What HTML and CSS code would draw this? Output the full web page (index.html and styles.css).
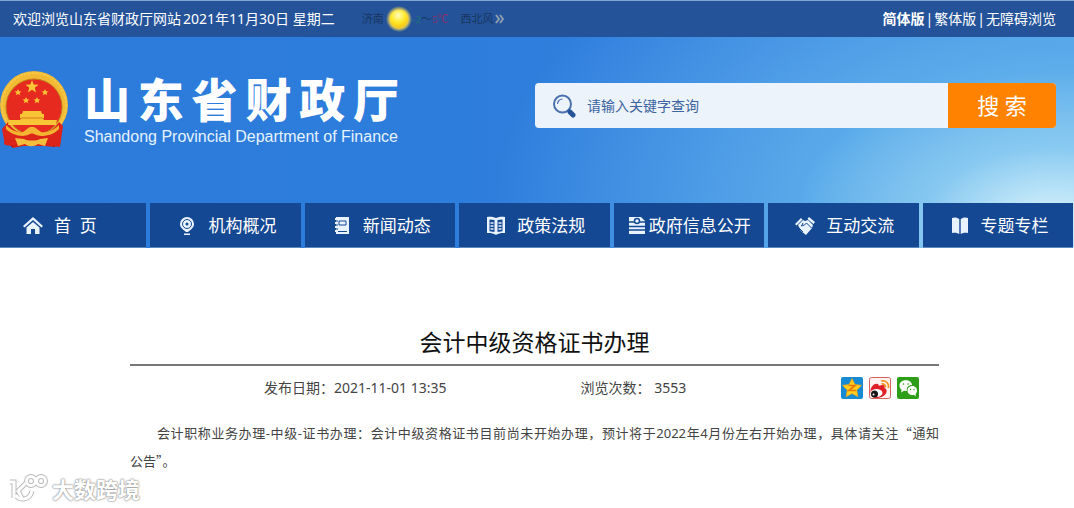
FILE: index.html
```html
<!DOCTYPE html>
<html lang="zh-CN">
<head>
<meta charset="utf-8">
<title>会计中级资格证书办理</title>
<link rel="stylesheet" href="styles.css">
</head>
<body>
<div class="topbar">
  <div class="welcome"><span>欢迎浏览山东省财政厅网站</span><span>2021年11月30日 星期二</span></div>
  <div class="weather">
    <span>济南</span>
    <svg class="sun" viewBox="0 0 26 26" aria-hidden="true">
      <defs>
        <radialGradient id="halo"><stop offset=".7" stop-color="#e9d257"/><stop offset="1" stop-color="#e9d257" stop-opacity="0"/></radialGradient>
        <radialGradient id="disc" cx=".45" cy=".3" r=".75"><stop offset="0" stop-color="#fffbc0"/><stop offset=".5" stop-color="#ffea2e"/><stop offset="1" stop-color="#f5bc0c"/></radialGradient>
      </defs>
      <circle cx="13" cy="13" r="13" fill="url(#halo)"/><circle cx="13" cy="13" r="9" fill="url(#disc)"/>
    </svg>
    <span class="temp"><span class="low">-2</span>～<span class="high">5℃</span></span>
    <span>西北风</span>
    <svg class="more" viewBox="0 0 9 10" aria-hidden="true"><path d="M1 1l3 4-3 4M5 1l3 4-3 4"/></svg>
  </div>
  <div class="versions"><a href="#" class="current">简体版</a><span>|</span><a href="#">繁体版</a><span>|</span><a href="#">无障碍浏览</a></div>
</div>

<div class="hero">
  <header class="masthead">
    <div class="brand">
      <svg class="emblem" viewBox="0 0 68 78" aria-hidden="true">
        <path d="M9 54L6 63 4 74l6 1 3 3 10-2h22l10 1 2-4 4-1-2-17z" fill="#d92118"/>
        <path d="M6 61l7 8-1 8M59 60l-6 10 1 7" stroke="#8f1010" stroke-width="1.5" fill="none"/>
        <circle cx="34" cy="35" r="34" fill="#f2b934"/>
        <circle cx="34" cy="35" r="32" fill="none" stroke="#f6c846" stroke-width="2" stroke-dasharray="3 1"/>
        <circle cx="34" cy="37" r="28" fill="#e62a20" stroke="#bd7c1b"/>
        <path d="M8 52c5 9 12 12 19 10 2-5 9-5 11 0 8 2 15-1 21-10l4 4-3 21-8-1-6-4-14 3-14-3-6 4-7-1-3-16z" fill="#dc241a"/>
        <g fill="#f8c537">
          <path d="M32 10l1.700 4.600 4.900.200-3.900 3 1.400 4.700-4.100-2.700-4.100 2.700 1.400-4.700-3.900-3 4.900-.200z"/>
          <path d="M18 19l1 2.300 2.500.100-2 1.500.7 2.400-2.200-1.300-2.200 1.300.7-2.400-2-1.500 2.500-.1z"/>
          <path d="M45 19l1 2.300 2.500.100-2 1.500.7 2.400-2.200-1.300-2.200 1.300.7-2.400-2-1.500 2.500-.1z"/>
          <path d="M26 27l1 2.300 2.500.100-2 1.500.7 2.400-2.200-1.300-2.200 1.300.7-2.400-2-1.500 2.500-.1z"/>
          <path d="M37 27l1 2.300 2.500.100-2 1.500.7 2.400-2.200-1.300-2.200 1.300.7-2.400-2-1.500 2.500-.1z"/>
          <path d="M23 41h18l1 3h2v4h-1l1 2h13l-1 5H8l1-5h11l1-2h-1v-4h2z"/>
        </g>
        <path d="M21 48h22" stroke="#d9781b"/>
        <path d="M6 55c5 5 11 8 17 7l4-3c3-3 7-3 10 0l4 3c6 1 13-2 18-7v4c-5 5-11 7-18 7l-5-1c-3-2-5-2-8 0l-5 1c-7 0-13-3-17-7z" fill="#f3b432"/>
        <path d="M15 68l9 1c3 2 13 2 16 0l8-1-3 8-7-2c-4 3-9 3-13 0l-7 2z" fill="#f3bd3d"/>
      </svg>
      <div class="brand-text">
        <h1>山东省财政厅</h1>
        <p>Shandong Provincial Department of Finance</p>
      </div>
    </div>
    <form class="search" role="search">
      <label for="q"><svg viewBox="0 0 24 24" role="img" aria-label="搜索关键字"><circle cx="10.500" cy="10" r="8.500" fill="none" stroke="#4a71ad" stroke-width="2"/><path d="M5.500 10a5 5 0 0 1 5-5" fill="none" stroke="#4a71ad" stroke-width="1.200"/><path d="M16 16l2 2" stroke="#2e5ca0" stroke-width="2"/><path d="M18 18l3 3" stroke="#24539a" stroke-width="5" stroke-linecap="round"/></svg></label>
      <input id="q" type="text" placeholder="请输入关键字查询">
      <button type="button">搜 索</button>
    </form>
  </header>
  <nav class="mainnav">
    <a href="#"><svg viewBox="0 0 20 20"><path d="M0 10l10-9 10 9-1.500 1.500L10 4l-8.500 7.500z"/><path d="M3.500 11.500L10 6l6.500 5.500V18H12v-5H8v5H3.500z"/></svg>首&nbsp; 页</a>
    <a href="#"><svg viewBox="0 0 20 20"><path d="M10 1a7 7 0 0 0-7 7c0 4 4 6 6 8h2c2-2 6-4 6-8a7 7 0 0 0-7-7z"/><circle cx="10" cy="8" r="4.500" class="line"/><circle cx="10" cy="8" r="1.500" class="cut"/><path d="M7 17.500h6v1.500H7z"/></svg>机构概况</a>
    <a href="#"><svg viewBox="0 0 20 20"><path d="M4 1h13v17H4v-2H3v-2h1v-2H3v-2h1V8H3V6h1V4H3V2h1z"/><path d="M7 5h7v4H7zM3 5h3M3 9h3M3 13h3M6 15.500h9" class="line"/></svg>新闻动态</a>
    <a href="#"><svg viewBox="0 0 20 20"><path d="M1 1c4-.5 6 0 9 1 3-1 5-1.500 9-1v16c-4-.2-6 .2-9 2-3-1.800-5-2.200-9-2z"/><path d="M3.500 3.500l5 .5v12l-5-.8zM16.500 3.500l-5 .5v12l5-.8z" class="cut"/><path d="M4.500 7h3M4.500 10h3M4.500 13h3M12.500 7h3M12.500 10h3M12.500 13h3" class="bright"/></svg>政策法规</a>
    <a href="#" class="tight"><svg viewBox="0 0 20 20"><path d="M2 1h12l4 4v13H2z"/><path d="M2 6h5M13 6h6M2 10.500h16M2 14h16" class="stroke"/><circle cx="10" cy="5" r="2.500" class="stroke"/></svg>政府信息公开</a>
    <a href="#"><svg viewBox="0 0 20 20"><path d="M0 8l6-6 1.500 1.500L1.500 9.500zM14 1l6 5-1.500 2-6-5zM3 9l5-5 2 1 3-1 5 5-1 3-6 7-5-4z"/><path d="M8 7L6.500 10l3-1 2-2 5 5M4 12l4 4" class="line"/></svg>互动交流</a>
    <a href="#"><svg viewBox="0 0 20 20"><path d="M2 2c3-1 5-.5 7.300 1v15C7 17 5 16.500 2 17zM18 2c-3-1-5-.5-7.300 1v15c2.300-1 4.300-1.500 7.300-1z"/></svg>专题专栏</a>
  </nav>
</div>

<main class="article">
  <h2>会计中级资格证书办理</h2>
  <div class="meta">
    <span class="date">发布日期：2021-11-01 13:35</span>
    <span class="views">浏览次数： 3553</span>
    <div class="share">
      <a href="#" aria-label="QQ空间"><svg viewBox="0 0 22 22"><rect width="22" height="22" rx="2" fill="#168bd3"/><path d="M11 1.500l2.900 6 6.600.900-4.800 4.600 1.200 6.600L11 16.500l-5.900 3.100 1.200-6.600L1.500 8.400l6.600-.9z" fill="#ffcf20" stroke="#f3a313" stroke-width=".7"/><path d="M7.500 8.500h6.500l-6 5h7" fill="none" stroke="#e8780c" stroke-width="1.700"/></svg></a>
      <a href="#" aria-label="新浪微博"><svg viewBox="0 0 22 22"><rect x=".5" y=".5" width="21" height="21" rx="2" fill="#fdf2ef" stroke="#d6605c"/><path d="M1.500 14c0-4 4-8 7-7 2 .5 1 2 1 2s5-2 6 0c.5 1 0 2 0 2s3 1 2 4c-1 5-9 7-13 5.500-2-1-3-3.500-3-6.500z" fill="#df2029"/><ellipse cx="7.500" cy="16" rx="6" ry="4" fill="#fff"/><circle cx="5.500" cy="17" r="3.500" fill="#161616"/><circle cx="4.500" cy="17.500" r="1" fill="#fff"/><path d="M12 4c5-1 8 2 7.500 7M12.500 7c2.500-.5 4.300.8 4 3.500" fill="none" stroke="#f29422" stroke-width="1.700"/></svg></a>
      <a href="#" aria-label="微信"><svg viewBox="0 0 22 22"><rect width="22" height="22" rx="2" fill="#2c9e18"/><path d="M2.500 8.500c0-7 12.500-7 12.500-.5-3 0-6 2-5 6l-3-.3L4 15.500l.7-2.700C3 11.800 2.500 10 2.500 8.500z" fill="#fff"/><path d="M20 13.500c0-6-9.500-6-9.500 0 0 3.500 3 5 6 4.300l2.500 1.500-.6-2.200c1-.8 1.600-2 1.600-3.600z" fill="#fff"/><g fill="#2c9e18"><circle cx="6.500" cy="7" r=".8"/><circle cx="11" cy="7" r=".8"/><circle cx="13.500" cy="12.500" r=".7"/><circle cx="17" cy="12.500" r=".7"/></g></svg></a>
    </div>
  </div>
  <p class="content">会计职称业务办理-中级-证书办理：会计中级资格证书目前尚未开始办理，预计将于2022年4月份左右开始办理，具体请关注<span class="quote">“</span>通知<span class="keep">公告<span class="quote">”</span>。</span></p>
</main>

<div class="watermark">
  <svg viewBox="0 0 42 30" aria-hidden="true">
    <g class="edge"><path d="M2 8h4v16M18 9l-8 8 4 7M8 21c2 6 14 6 16-4"/><circle cx="23" cy="7" r="4.500"/><circle cx="33" cy="7" r="4.500"/></g>
    <g class="fill"><path d="M2 8h4v16M18 9l-8 8 4 7M8 21c2 6 14 6 16-4"/><circle cx="23" cy="7" r="4.500"/><circle cx="33" cy="7" r="4.500"/></g>
  </svg>
  <span>大数跨境</span>
</div>
</body>
</html>
```
FILE: styles.css
```css
* { box-sizing: border-box; }

body {
  margin: 0;
  min-height: 100vh;
  position: relative;
  background: #fff;
  color: #444;
  font: 14px/20px "Noto Sans", "Noto Sans CJK SC", sans-serif;
}

a { color: inherit; text-decoration: none; }
h1, h2, p { margin: 0; }
svg { display: block; flex: none; }

.topbar {
  display: flex;
  align-items: center;
  height: 37px;
  padding: 0 18px 0 13px;
  border-top: 1px solid #7fa5d4;
  background: #24539a;
  color: #fff;
}
.welcome { display: flex; gap: 2px; white-space: nowrap; }
.weather {
  display: flex;
  align-items: center;
  margin-left: 27px;
  color: #183660;
  font-family: "Liberation Serif", "Noto Sans CJK SC", serif;
  font-size: 11px;
}
.sun { width: 26px; height: 26px; margin-left: 2px; }
.temp { margin-right: 12px; }
.low { color: #1c7773; }
.high { color: #8b3068; }
.more { width: 9px; height: 10px; margin-left: 2px; fill: none; stroke: #8b9cb0; stroke-width: 2; }
.versions { display: flex; gap: 1px; margin-left: auto; }
.current { font-weight: 700; }

.hero {
  overflow: hidden;
  background:
    radial-gradient(ellipse 260px 150px at 98% 88%, #d9f3fb, #a0d8f480 50%, #7cc4ef00),
    radial-gradient(ellipse 580px 340px at 100% 80%, #80c6f0, #5aaaea 45%, #3583e000),
    linear-gradient(90deg, #2c7bdb, #2d7ddc 40%, #3984e2);
}
.masthead {
  display: flex;
  justify-content: space-between;
  align-items: flex-start;
  height: 166px;
  padding-right: 18px;
}
.brand { display: flex; gap: 16px; padding-top: 33px; color: #fff; }
.emblem { width: 68px; height: 78px; }
.brand-text { width: 315px; }
.brand h1 {
  font-size: 46px;
  font-weight: 900;
  line-height: 58px;
  text-align-last: justify;
}
.brand p {
  font-family: "Liberation Sans", Arial, sans-serif;
  font-size: 16px;
  line-height: 18px;
  white-space: nowrap;
  color: #e5f2ff;
}

.search {
  display: flex;
  width: 521px;
  height: 45px;
  margin-top: 46px;
  overflow: hidden;
  border-radius: 4px;
  background: #ecf3fb;
}
.search label { padding: 11px 11px 0 17px; }
.search label svg { width: 24px; height: 24px; }
.search input {
  flex: 1;
  min-width: 0;
  border: 0;
  padding: 0;
  outline: 0;
  background: transparent;
  color: #3c639f;
  font: inherit;
}
.search input::placeholder { color: #3c639f; opacity: 1; }
.search button {
  width: 108px;
  border: 0;
  padding-bottom: 4px;
  background: #ff8200;
  color: #fff;
  font: 22px "Noto Sans", "Noto Sans CJK SC", sans-serif;
}

.mainnav {
  display: grid;
  grid-template-columns: repeat(7, 1fr);
  gap: 4px;
  margin: 0 1px 0 -4px;
}
.mainnav a {
  display: flex;
  align-items: center;
  gap: 11px;
  height: 45px;
  padding: 2px 0 0 27px;
  border-bottom: 1px solid #5f88bd;
  background: #154893;
  color: #fff;
  font-size: 17px;
  white-space: nowrap;
}
.mainnav .tight { gap: 2px; padding-left: 13px; }
.mainnav svg { width: 20px; height: 20px; fill: #e9f2ff; }
.mainnav .line { fill: none; stroke: #154893; stroke-width: 1; }
.mainnav .cut { fill: #154893; }
.mainnav .stroke { fill: none; stroke: #154893; stroke-width: 1.5; }
.mainnav .bright { fill: none; stroke: #e9f2ff; stroke-width: 1.5; }

.article { padding: 78px 135px 30px 130px; }
.article h2 {
  padding-bottom: 6px;
  border-bottom: 2px solid #777;
  color: #111;
  font-size: 23px;
  font-weight: 400;
  line-height: 32px;
  text-align: center;
}
.meta {
  display: flex;
  align-items: center;
  padding: 11px 20px 0 134px;
}
.views { margin-left: 134px; }
.share { display: flex; gap: 6px; margin-left: auto; }
.share svg { width: 22px; height: 22px; }
.content {
  padding-top: 20px;
  font-size: 13px;
  line-height: 27px;
  text-align: justify;
  text-indent: 27px;
}
.keep { white-space: nowrap; }
.quote { font-family: "Noto Sans CJK SC", sans-serif; }

.watermark {
  position: absolute;
  left: 8px;
  bottom: 4px;
  display: flex;
  align-items: center;
  gap: 2px;
  color: #fff;
  font-size: 22px;
  font-weight: 700;
  line-height: 30px;
  text-shadow: 0 0 2px #999, 0 0 2px #999, 0 0 1px #aaa;
}
.watermark svg { width: 42px; height: 30px; fill: none; }
.edge { stroke: #bbb; stroke-width: 5; }
.fill { stroke: #fff; stroke-width: 3; }
```
